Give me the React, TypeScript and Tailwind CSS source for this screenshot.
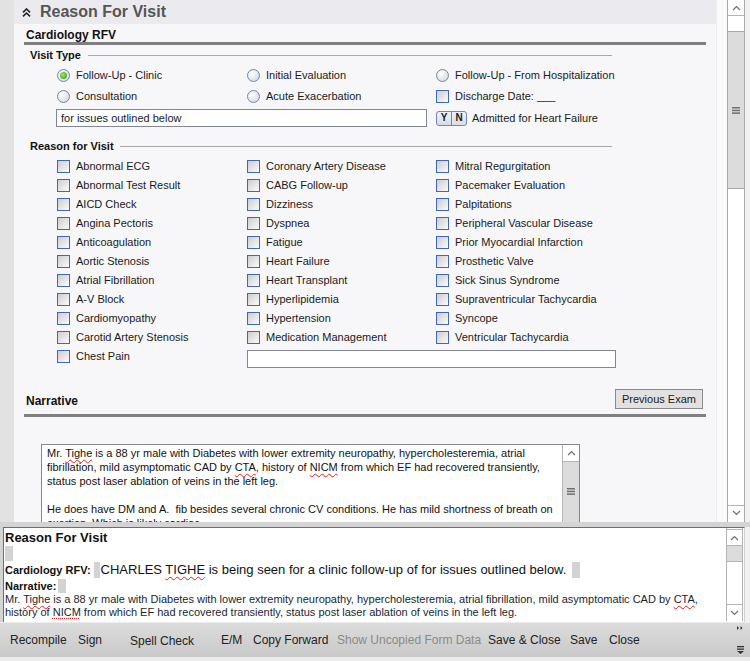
import React from "react";

const SQ = "underline decoration-wavy decoration-[#e02020] decoration-1 underline-offset-[2px]";

function UpArrow() {
  return (
    <svg width="9" height="6" viewBox="0 0 9 6">
      <path d="M1 5 L4.5 1.5 L8 5" fill="none" stroke="#707070" strokeWidth="1.2" />
    </svg>
  );
}
function DownArrow() {
  return (
    <svg width="9" height="6" viewBox="0 0 9 6">
      <path d="M1 1 L4.5 4.5 L8 1" fill="none" stroke="#707070" strokeWidth="1.2" />
    </svg>
  );
}
function Grip() {
  return (
    <svg width="8" height="7" viewBox="0 0 8 7">
      <rect x="0" y="0" width="8" height="1.5" fill="#707070" />
      <rect x="0" y="2.7" width="8" height="1.5" fill="#707070" />
      <rect x="0" y="5.4" width="8" height="1.5" fill="#707070" />
    </svg>
  );
}

function Radio({ checked }: { checked?: boolean }) {
  return (
    <span className="w-[13px] h-[13px] shrink-0 rounded-full border border-[#6f86b3] bg-[radial-gradient(circle_at_35%_35%,#ffffff,#cfd2d8)] flex items-center justify-center">
      {checked && (
        <span className="w-[7px] h-[7px] rounded-full bg-[radial-gradient(circle_at_40%_40%,#9be864,#2f9a10)]" />
      )}
    </span>
  );
}

function Check() {
  return (
    <span className="w-[13px] h-[13px] shrink-0 border border-[#4168b4] bg-linear-to-br from-[#cdcdcd] to-[#fbfbfb]" />
  );
}

function RadioItem({ label, checked }: { label: string; checked?: boolean }) {
  return (
    <div className="flex items-center h-[21px]">
      <Radio checked={checked} />
      <span className="ml-[6px] text-[11px] text-[#1a1a1a] whitespace-nowrap">{label}</span>
    </div>
  );
}

function CheckItem({ label }: { label: React.ReactNode }) {
  return (
    <div className="flex items-center h-[19px]">
      <Check />
      <span className="ml-[6px] text-[11px] text-[#1a1a1a] whitespace-nowrap">{label}</span>
    </div>
  );
}

const col1 = [
  "Abnormal ECG",
  "Abnormal Test Result",
  "AICD Check",
  "Angina Pectoris",
  "Anticoagulation",
  "Aortic Stenosis",
  "Atrial Fibrillation",
  "A-V Block",
  "Cardiomyopathy",
  "Carotid Artery Stenosis",
];
const col2 = [
  "Coronary Artery Disease",
  "CABG Follow-up",
  "Dizziness",
  "Dyspnea",
  "Fatigue",
  "Heart Failure",
  "Heart Transplant",
  "Hyperlipidemia",
  "Hypertension",
  "Medication Management",
];
const col3 = [
  "Mitral Regurgitation",
  "Pacemaker Evaluation",
  "Palpitations",
  "Peripheral Vascular Disease",
  "Prior Myocardial Infarction",
  "Prosthetic Valve",
  "Sick Sinus Syndrome",
  "Supraventricular Tachycardia",
  "Syncope",
  "Ventricular Tachycardia",
];

export default function App() {
  return (
    <div className="w-[750px] h-[661px] overflow-hidden bg-[#ececec] font-['Liberation_Sans',Arial,sans-serif] text-[#1a1a1a]">
      {/* top scroll area */}
      <div className="flex h-[522px] overflow-hidden">
        <div className="w-[14px] bg-[#e2e2e2]" />
        <div className="w-[702px] bg-[#f7f7f9] flex flex-col">
          <div className="h-[24px] shrink-0 bg-[#ebebef] flex items-center">
            <span className="ml-[8px] w-[9px] h-[9px] flex">
              <svg width="9" height="9" viewBox="0 0 9 9">
                <path d="M1 4.3 L4.5 1 L8 4.3" fill="none" stroke="#222" strokeWidth="1.6" />
                <path d="M1 8.3 L4.5 5 L8 8.3" fill="none" stroke="#222" strokeWidth="1.6" />
              </svg>
            </span>
            <span className="ml-[9px] text-[16px] font-bold text-[#555] leading-none">Reason For Visit</span>
          </div>

          <div className="px-[10px] flex flex-col">
            <div className="h-[18px] pt-[5px] pl-[2px] text-[12px] font-bold leading-[13px] text-[#111]">Cardiology RFV</div>
            <div className="h-[3px] bg-[#808080]" />

            <div className="w-[588px] h-[20px] flex items-center pl-[6px]">
              <span className="text-[11px] font-bold text-[#111]">Visit Type</span>
              <span className="flex-1 h-px bg-[#a8a8a8] ml-[7px]" />
            </div>

            <div className="pl-[33px] grid grid-cols-[190px_189px_1fr]">
              <RadioItem label="Follow-Up - Clinic" checked />
              <RadioItem label="Initial Evaluation" />
              <RadioItem label="Follow-Up - From Hospitalization" />
              <RadioItem label="Consultation" />
              <RadioItem label="Acute Exacerbation" />
              <div className="flex items-center h-[21px]">
                <Check />
                <span className="ml-[6px] text-[11px] text-[#1a1a1a] whitespace-nowrap">Discharge Date: ___</span>
              </div>
            </div>

            <div className="h-[22px] flex items-center pl-[32px]">
              <div className="w-[371px] h-[18px] border border-[#82868e] bg-white text-[11px] pl-[4px] flex items-center">
                for issues outlined below
              </div>
              <div className="ml-[9px] h-[15px] flex items-stretch rounded-[3px] border border-[#6e86b8] bg-linear-to-b from-[#eef1f7] to-[#d7dde9] text-[10px] font-bold text-[#1a1a1a] leading-none">
                <span className="w-[14px] flex items-center justify-center">Y</span>
                <span className="w-px bg-[#6e86b8]" />
                <span className="w-[14px] flex items-center justify-center">N</span>
              </div>
              <span className="ml-[5px] text-[11px]">Admitted for Heart Failure</span>
            </div>

            <div className="mt-[7px] w-[588px] h-[20px] flex items-center pl-[6px]">
              <span className="text-[11px] font-bold text-[#111]">Reason for Visit</span>
              <span className="flex-1 h-px bg-[#a8a8a8] ml-[6px]" />
            </div>

            <div className="mt-[1px] pl-[33px] grid grid-cols-[190px_189px_1fr]">
              {col1.map((c, i) => (
                <React.Fragment key={c}>
                  <CheckItem label={c} />
                  <CheckItem label={col2[i]} />
                  <CheckItem label={col3[i]} />
                </React.Fragment>
              ))}
              <div className="h-[23px]">
                <CheckItem label="Chest Pain" />
              </div>
              <div className="col-span-2 h-[23px] pt-[3px]">
                <div className="w-[369px] h-[18px] border border-[#82868e] bg-white" />
              </div>
            </div>

            <div className="mt-[18px] h-[22px] flex items-center justify-between">
              <span className="pl-[2px] pt-[3px] text-[12px] font-bold text-[#111]">Narrative</span>
              <div className="mr-[3px] w-[88px] h-[20px] border border-[#8a8a8a] bg-[#e1e1e1] text-[11px] flex items-center justify-center">
                Previous Exam
              </div>
            </div>
            <div className="mt-[4px] h-[3px] bg-[#808080]" />

            <div className="mt-[27px] ml-[17px] w-[539px] h-[110px] border border-[#828790] bg-white flex">
              <div className="flex-1 pl-[5px] pt-[1px] text-[11px] leading-[14px] text-[#111] whitespace-nowrap overflow-hidden">
                <div>
                  Mr. <span className={SQ}>Tighe</span> is a 88 yr male with Diabetes with lower extremity neuropathy, hypercholesteremia, atrial
                </div>
                <div>
                  fibrillation, mild asymptomatic CAD by <span className={SQ}>CTA</span>, history of <span className={SQ}>NICM</span> from which EF had recovered transiently,
                </div>
                <div>status post laser ablation of veins in the left leg.</div>
                <div className="h-[14px]" />
                <div>He does have DM and A.&nbsp; fib besides several chronic CV conditions. He has mild shortness of breath on</div>
                <div>exertion. Which is likely cardiac.</div>
              </div>
              <div className="w-[17px] flex flex-col border-l border-[#b4b4b4]">
                <div className="h-[17px] bg-white border-b border-[#b4b4b4] flex items-center justify-center">
                  <UpArrow />
                </div>
                <div className="flex-1 bg-[#dcdcdc] flex justify-center pt-[26px]">
                  <Grip />
                </div>
              </div>
            </div>
          </div>
        </div>
        <div className="w-[11px] bg-[#fafafa] border-l border-[#eeeef0]" />
        {/* main scrollbar */}
        <div className="w-[18px] bg-white border-l border-r border-[#a8a8a8] flex flex-col">
          <div className="h-[16px] border-b border-[#b4b4b4] flex items-center justify-center">
            <UpArrow />
          </div>
          <div className="h-[15px]" />
          <div className="h-[158px] bg-[#dcdcdc] border-y border-[#a8a8a8] flex items-center justify-center">
            <Grip />
          </div>
          <div className="flex-1" />
          <div className="h-[15px] border-t border-[#b4b4b4] flex items-center justify-center mb-[2px]">
            <DownArrow />
          </div>
        </div>
        <div className="w-[5px] bg-[#f2f2f2]" />
      </div>

      {/* separator */}
      <div className="h-[5px] bg-[#d4d4d4]" />

      {/* preview pane */}
      <div className="flex h-[95px]">
        <div className="w-[3px] bg-[#d4d4d4]" />
        <div className="w-[742px] bg-white border-l border-t border-[#6e6e6e] border-r-[1px] border-r-[#d0d0d0] flex">
          <div className="flex-1 pl-[1px] pt-[2px] overflow-hidden whitespace-nowrap">
            <div className="text-[13px] font-bold leading-[16px] text-[#111]">Reason For Visit</div>
            <div className="w-[8px] h-[15px] bg-[#d3d3d3]" />
            <div className="h-[18px] flex items-center">
              <span className="text-[11px] font-bold text-[#111]">Cardiology RFV:</span>
              <span className="ml-[3px] w-[6px] h-[16px] bg-[#d3d3d3]" />
              <span className="ml-[1px] text-[13px] text-[#111]">
                CHARLES <span className={SQ}>TIGHE</span> is being seen for a clinic follow-up of for issues outlined below.
              </span>
              <span className="ml-[6px] w-[8px] h-[16px] bg-[#d3d3d3]" />
            </div>
            <div className="h-[14px] flex items-center">
              <span className="text-[11px] font-bold text-[#111]">Narrative:</span>
              <span className="ml-[2px] w-[8px] h-[14px] bg-[#d3d3d3]" />
            </div>
            <div className="text-[11px] leading-[13px] text-[#1a1f33]">
              <div>
                Mr. <span className={SQ}>Tighe</span> is a 88 yr male with Diabetes with lower extremity neuropathy, hypercholesteremia, atrial fibrillation, mild asymptomatic CAD by <span className={SQ}>CTA</span>,
              </div>
              <div>
                history of <span className="underline decoration-dotted decoration-[#e02020] decoration-1 underline-offset-[2px]">NICM</span> from which EF had recovered transiently, status post laser ablation of veins in the left leg.
              </div>
            </div>
          </div>
          <div className="w-[17px] mr-[1px] mb-[1px] flex flex-col border-l border-r border-[#b4b4b4] bg-white">
            <div className="mt-[1px] h-[17px] border-y border-[#b4b4b4] flex items-center justify-center">
              <UpArrow />
            </div>
            <div className="h-[16px] bg-[#dcdcdc] border-b border-[#b4b4b4]" />
            <div className="flex-1" />
            <div className="h-[17px] border-t border-[#b4b4b4] flex items-center justify-center">
              <DownArrow />
            </div>
          </div>
        </div>
        <div className="w-[5px] bg-[#f2f2f2]" />
      </div>

      {/* toolbar */}
      <div className="h-[35px] flex items-center bg-linear-to-b from-[#dcdcdc] to-[#c9c9c9] border-t border-[#ececec] text-[12px] text-[#222] pl-[10px]">
        <span className="w-[68px]">Recompile</span>
        <span className="w-[52px]">Sign</span>
        <span className="w-[91px] pt-[2px]">Spell Check</span>
        <span className="w-[32px]">E/M</span>
        <span className="w-[84px]">Copy Forward</span>
        <span className="w-[151px] text-[#8a8a8a]">Show Uncopied Form Data</span>
        <span className="w-[82px]">Save &amp; Close</span>
        <span className="w-[39px]">Save</span>
        <span className="w-[40px]">Close</span>
        <div className="ml-auto mr-[6px] h-full flex flex-col justify-between py-[3px]">
          <svg width="6" height="4" viewBox="0 0 6 4">
            <path d="M0 0 L2 2 L0 4 Z M3.5 0 L5.5 2 L3.5 4 Z" fill="#333" />
          </svg>
          <svg width="7" height="8" viewBox="0 0 7 8">
            <rect x="0" y="0" width="7" height="1.3" fill="#333" />
            <rect x="0" y="2.5" width="7" height="1.3" fill="#333" />
            <path d="M0 5 L7 5 L3.5 8 Z" fill="#333" />
          </svg>
        </div>
      </div>
      <div className="h-[4px] bg-[#ebebeb]" />
    </div>
  );
}
